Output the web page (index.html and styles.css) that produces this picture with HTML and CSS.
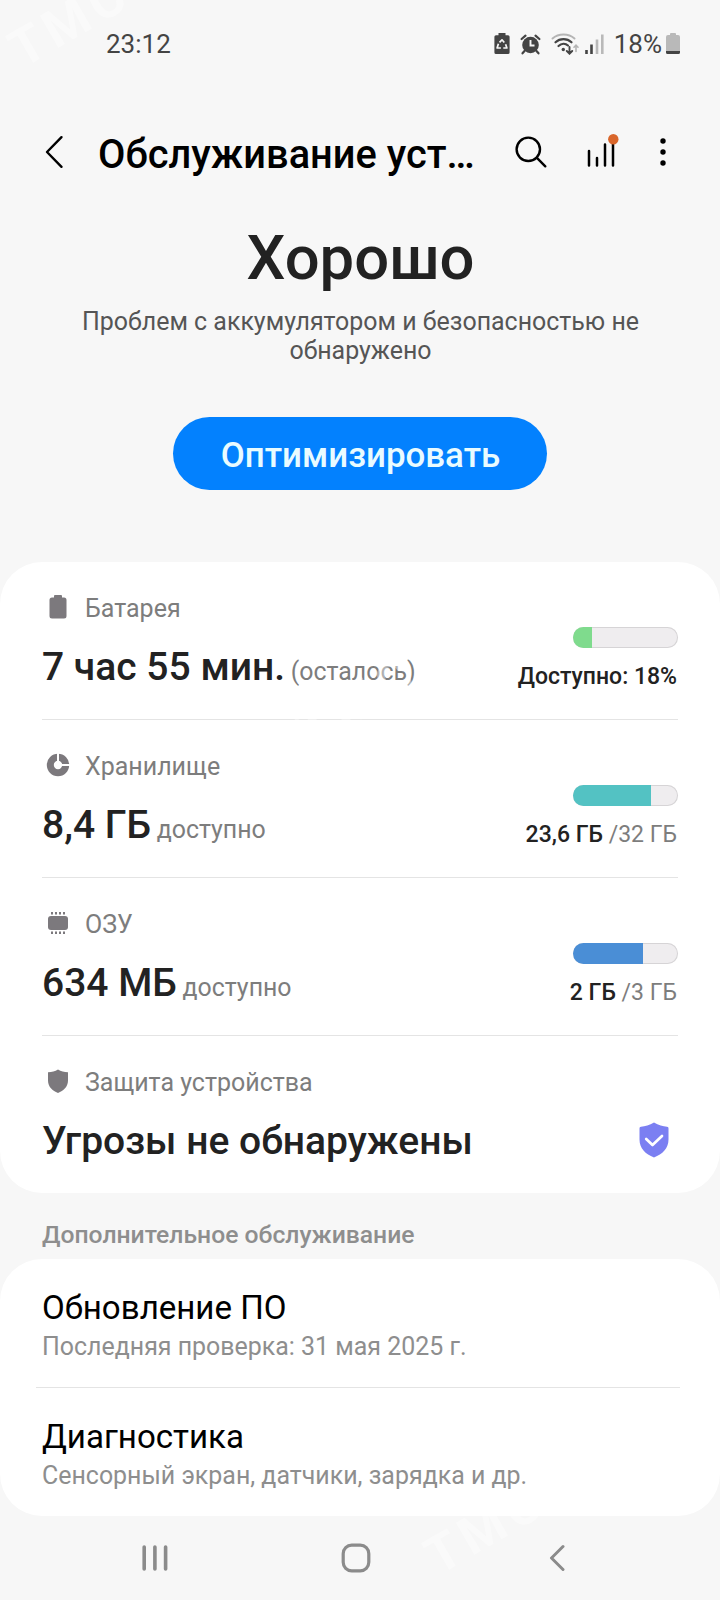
FILE: index.html
```html
<!DOCTYPE html>
<html lang="ru">
<head>
<meta charset="utf-8">
<title>Обслуживание устройства</title>
<link rel="stylesheet" href="styles.css">
</head>
<body>
<div class="screen">
  <div class="status">
    <span class="clock">23:12</span>
    <div class="status-icons">
      <svg class="si-saver" width="16" height="22" viewBox="0 0 16 22"><path fill="#444" d="M4.500 0h7v2.200H14a1.600 1.600 0 0 1 1.600 1.600v15.600A1.600 1.600 0 0 1 14 21H2A1.600 1.600 0 0 1 .4 19.400V3.800A1.600 1.600 0 0 1 2 2.200h2.500z"/><path fill="none" stroke="#f7f7f7" stroke-width="1.700" stroke-linejoin="round" d="M5.500 9.300L8 6.800l2.300 2.700M11.600 11.300l1.300 3.700H9.300M4.400 10.800L3.100 15h3.800"/></svg>
      <svg class="si-alarm" width="21" height="21" viewBox="0 0 21 21"><circle cx="10.500" cy="11" r="8.300" fill="#444"/><path d="M1.600 5L5.500 1.600M19.400 5L15.500 1.600M4.500 17L2.500 19.300M16.500 17l2 2.300" stroke="#444" stroke-width="2.200" stroke-linecap="round"/><path d="M10.500 6v5.500h4" fill="none" stroke="#f7f7f7" stroke-width="1.900"/></svg>
      <svg class="si-wifi" width="28" height="22" viewBox="0 0 28 22" fill="none" stroke-linecap="round"><path d="M1.500 5.500C7.500.2 17.500.2 23.500 5.500" stroke="#b5b5b5" stroke-width="2"/><path d="M4.500 9.300C9 5.100 16 5.100 20.500 9.300M7.500 13c3-2.700 7-2.700 9.500-.5" stroke="#444" stroke-width="2.200"/><circle cx="12.300" cy="16.500" r="1.700" fill="#444"/><path d="M18.500 14v6.500M15.800 18l2.700 2.700 2.700-2.700" stroke="#444" stroke-width="1.900"/><path d="M25 18.500v-6M23 14.200l2-2 2 2" stroke="#b5b5b5" stroke-width="1.600"/></svg>
      <svg class="si-signal" width="19" height="20" viewBox="0 0 19 20"><path stroke="#444" stroke-width="2.600" d="M1.500 16v4M6.500 10.500V20"/><path stroke="#b9b9b9" stroke-width="2.600" d="M12 5.500V20M17.300.5V20"/></svg>
      <span class="percent">18%</span>
      <svg class="si-battery" width="14" height="22" viewBox="0 0 14 22"><path fill="#b9b9b9" d="M5 0h4a1 1 0 0 1 1 1v1h2a2 2 0 0 1 2 2v14H0V4a2 2 0 0 1 2-2h2V1a1 1 0 0 1 1-1z"/><path fill="#444" d="M0 18h14v1.500a1.500 1.500 0 0 1-1.500 1.500h-11A1.500 1.500 0 0 1 0 19.500z"/></svg>
    </div>
  </div>

  <header class="appbar">
    <svg class="back" width="20" height="34" viewBox="0 0 20 34"><path d="M17.500 2.200L3 17l14.500 14.800" fill="none" stroke="#000" stroke-width="2.400" stroke-linecap="round" stroke-linejoin="round"/></svg>
    <h1 class="title">Обслуживание уст…</h1>
    <div class="actions">
      <svg width="32" height="32" viewBox="0 0 32 32" fill="none" stroke="#000" stroke-width="2.400" stroke-linecap="round"><circle cx="13.300" cy="13.300" r="11.700"/><path d="M21.700 21.700l8.600 8.600"/></svg>
      <svg class="report" width="32" height="34" viewBox="0 0 32 34"><path stroke="#000" stroke-width="2.500" stroke-linecap="round" d="M2 17v14.500M10 24v7.500M18 10.500v21M26 8v23.500"/><circle cx="26.300" cy="5.300" r="5.200" fill="#d9662b"/></svg>
      <svg class="more" width="6" height="28" viewBox="0 0 6 28"><circle cx="3" cy="3" r="2.700"/><circle cx="3" cy="14" r="2.700"/><circle cx="3" cy="25" r="2.700"/></svg>
    </div>
  </header>

  <section class="hero">
    <h2 class="state">Хорошо</h2>
    <p class="summary">Проблем с аккумулятором и безопасностью не<br>обнаружено</p>
    <button class="optimize">Оптимизировать</button>
  </section>

  <section class="card">
    <div class="row">
      <div class="info">
        <div class="label"><svg width="32" height="24" viewBox="0 0 32 24"><path fill="#7c797d" d="M13 0h6a1 1 0 0 1 1 1v1.500h2A2.500 2.500 0 0 1 24.500 5v16a2.500 2.500 0 0 1-2.500 2.500H10A2.500 2.500 0 0 1 7.500 21V5A2.500 2.500 0 0 1 10 2.500h2V1a1 1 0 0 1 1-1z"/></svg>Батарея</div>
        <div class="value">7 час 55 мин. <small>(осталось)</small></div>
      </div>
      <div class="usage">
        <div class="meter"><div class="fill green" style="width:18%"></div></div>
        <div class="amount">Доступно: 18%</div>
      </div>
    </div>
    <div class="row">
      <div class="info">
        <div class="label"><svg width="32" height="24" viewBox="0 0 32 24"><circle cx="16" cy="12" r="7.700" fill="none" stroke="#7c797d" stroke-width="7"/><path d="M16 0v12h12" fill="none" stroke="#fff" stroke-width="2"/></svg>Хранилище</div>
        <div class="value">8,4 ГБ <small>доступно</small></div>
      </div>
      <div class="usage">
        <div class="meter"><div class="fill teal" style="width:74%"></div></div>
        <div class="amount">23,6 ГБ <span>/32 ГБ</span></div>
      </div>
    </div>
    <div class="row">
      <div class="info">
        <div class="label"><svg width="32" height="24" viewBox="0 0 32 24"><rect x="6" y="5" width="20" height="14" rx="3" fill="#7c797d"/><path stroke="#7c797d" stroke-width="2" d="M10 1v2.500M14 1v2.500M18 1v2.500M22 1v2.500M10 20.500V23M14 20.500V23M18 20.500V23M22 20.500V23"/></svg>ОЗУ</div>
        <div class="value">634 МБ <small>доступно</small></div>
      </div>
      <div class="usage">
        <div class="meter"><div class="fill blue" style="width:67%"></div></div>
        <div class="amount">2 ГБ <span>/3 ГБ</span></div>
      </div>
    </div>
    <div class="row">
      <div class="info">
        <div class="label"><svg width="32" height="24" viewBox="0 0 32 24"><path fill="#7c797d" d="M16 .5c3 1.800 6 2.500 10 2.800v8.200c0 6.500-4.500 10-10 12.500-5.500-2.500-10-6-10-12.500V3.300c4-.3 7-1 10-2.800z"/></svg>Защита устройства</div>
        <div class="value">Угрозы не обнаружены</div>
      </div>
      <svg class="shield" width="30" height="36" viewBox="0 0 30 36"><path fill="#7b7ff2" d="M15 .5c4.500 2.700 9 3.900 13 4.300 1 .1 1.500.7 1.500 1.600v11.100c0 9-6 14.500-14.500 18C6.500 32 .5 26.500.5 17.500V6.400C.5 5.500 1 4.900 2 4.800 6 4.400 10.500 3.200 15 .5z"/><path d="M7.200 17l6.300 6L23 14" fill="none" stroke="#fff" stroke-width="2.700" stroke-linecap="round" stroke-linejoin="round"/></svg>
    </div>
  </section>

  <h3 class="section">Дополнительное обслуживание</h3>

  <section class="card more-list">
    <div class="item">
      <div class="item-title">Обновление ПО</div>
      <div class="item-sub">Последняя проверка: 31 мая 2025 г.</div>
    </div>
    <div class="item">
      <div class="item-title">Диагностика</div>
      <div class="item-sub">Сенсорный экран, датчики, зарядка и др.</div>
    </div>
  </section>

  <nav class="nav">
    <svg width="26" height="28" viewBox="0 0 26 28"><path stroke="#8b8b8b" stroke-width="3.600" stroke-linecap="round" d="M2.200 3v22M12.900 3v22M23.600 3v22"/></svg>
    <svg class="home" width="30" height="30" viewBox="0 0 30 30"><rect x="2.200" y="2.200" width="25.600" height="25.600" rx="8.500" fill="none" stroke="#8b8b8b" stroke-width="3.200"/></svg>
    <svg width="16" height="28" viewBox="0 0 16 28"><path d="M14 2.500L2.500 14 14 25.500" fill="none" stroke="#8b8b8b" stroke-width="3" stroke-linecap="round" stroke-linejoin="round"/></svg>
  </nav>

  <span class="mark mark-top">TMC</span>
  <span class="mark mark-mid">TMCARS</span>
  <span class="mark mark-low">TMCARS</span>
</div>
</body>
</html>
```
FILE: styles.css
```css
* { box-sizing: border-box; }
body { margin: 0; }
h1, h2, h3, p { margin: 0; font-weight: 500; }
svg { display: block; flex: none; }

.screen {
  position: relative;
  width: 720px;
  height: 1600px;
  overflow: hidden;
  background: #f7f7f7;
  font-family: Roboto, "Noto Sans", sans-serif;
  color: #222;
}

.status {
  display: flex;
  justify-content: space-between;
  align-items: center;
  height: 88px;
  padding: 0 40px 0 106px;
  font-size: 26px;
  color: #444;
}
.status-icons { display: flex; align-items: center; }
.si-alarm { margin-left: 10px; }
.si-wifi { margin-left: 10px; }
.si-signal { margin-left: 6px; }
.percent { margin: 0 4px 0 10px; }

.appbar {
  display: flex;
  align-items: center;
  height: 128px;
  padding: 0 54px 0 44px;
}
.title {
  margin: 5px 0 0 34px;
  font-size: 39.8px;
  line-height: 50px;
  color: #000;
  white-space: nowrap;
}
.actions { display: flex; align-items: center; margin-left: auto; }
.report { margin: -3px 0 0 40px; }
.more { margin-left: 41px; }

.hero { display: flex; flex-direction: column; align-items: center; text-align: center; }
.state { font-size: 61.6px; line-height: 84px; padding-left: 1px; }
.summary { margin-top: 7px; padding-left: 1px; font-size: 24.95px; line-height: 29px; font-weight: 400; color: #555; }
.optimize {
  width: 374px;
  height: 73px;
  margin: 52px 0 72px;
  padding: 3px 0 0 1px;
  border: 0;
  border-radius: 37px;
  background: #0381fe;
  color: #e9fbff;
  font: 500 34.9px Roboto, "Noto Sans", sans-serif;
}

.card { border-radius: 42px; background: #fff; padding: 0 42px; }
.row { display: flex; justify-content: space-between; height: 158px; border-bottom: 1px solid #e4e4e4; }
.row:last-child { height: 157px; border: 0; }
.info { padding-top: 31px; }
.label { display: flex; align-items: center; gap: 11px; font-size: 25px; line-height: 31px; color: #7d7d7d; }
.label svg { margin-top: -3px; width: 32px; }
.value { margin-top: 20px; font-size: 39px; line-height: 46px; font-weight: 500; white-space: nowrap; }
.value small { margin-left: -4px; font-size: 24.9px; line-height: 1; font-weight: 400; color: #7d7d7d; }
.usage { display: flex; flex-direction: column; align-items: flex-end; padding-top: 65px; }
.meter { width: 105px; height: 21px; overflow: hidden; border-radius: 11px; background: #efedef; box-shadow: inset 0 0 0 1px #d6d4d6; }
.fill { height: 100%; }
.green { background: #7fdb8d; }
.teal { background: #53c2c3; }
.blue { background: #4a8ed6; }
.amount { margin: 15px 1px 0 0; font-size: 23px; line-height: 28px; font-weight: 500; }
.amount span { font-weight: 400; color: #7d7d7d; }
.shield { margin: 86px 9px 0 0; }

.section { margin: 27px 42px 9px; font-size: 24.7px; line-height: 30px; color: #8e8e8e; }

.more-list { padding: 0 40px 0 36px; }
.item { height: 129px; padding: 29px 0 0 6px; border-bottom: 1px solid #e4e4e4; }
.item:last-child { height: 128px; border: 0; }
.item-title { font-size: 33.1px; line-height: 40px; color: #000; }
.item-sub { margin-top: 4px; font-size: 24.95px; line-height: 29px; color: #8e8e8e; }

.nav { display: flex; justify-content: space-between; align-items: center; height: 84px; padding: 0 155px 0 142px; }
.home { margin-right: 6px; }

.mark {
  position: absolute;
  font-size: 52px;
  line-height: 52px;
  font-weight: 700;
  letter-spacing: 6px;
  color: #fff;
  opacity: 0.4;
  transform: rotate(-30deg);
  transform-origin: 0 50%;
  pointer-events: none;
}
.mark-top { left: 14px; top: 28px; }
.mark-mid { left: 302px; top: 708px; }
.mark-low { left: 430px; top: 1535px; }
```
